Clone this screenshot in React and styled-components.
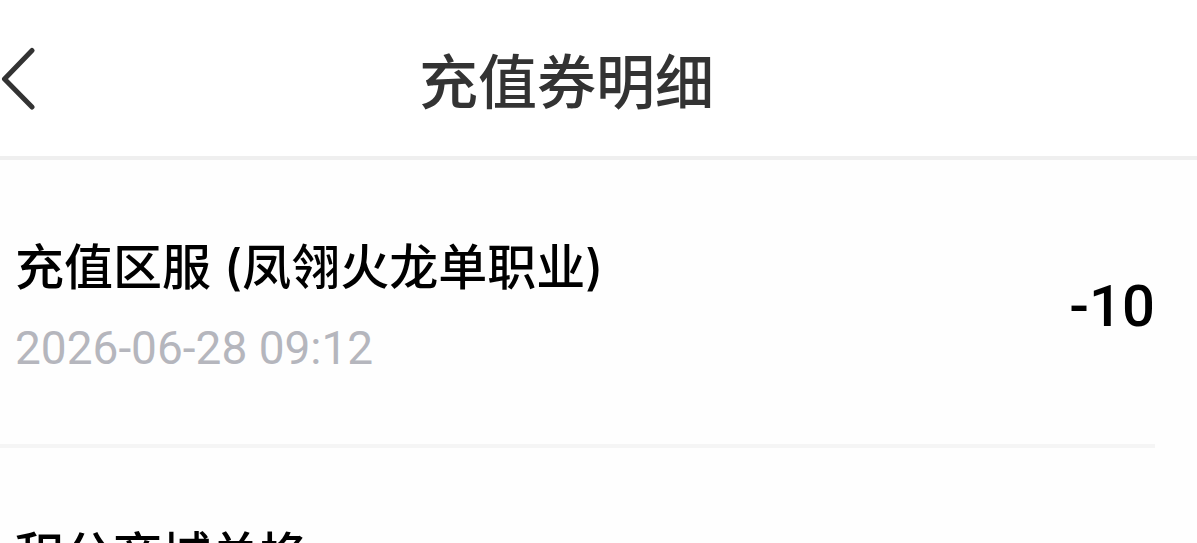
import React from "react";
import styled, { createGlobalStyle } from "styled-components";

const GlobalStyle = createGlobalStyle`
  *, *::before, *::after { box-sizing: border-box; }
  body {
    margin: 0;
    background: #fefefe;
    color: #000;
    font-family: Inter, "Noto Sans CJK SC", sans-serif;
  }
`;

const Page = styled.div`
  height: 100vh;
  overflow: hidden;
`;

const Header = styled.header`
  display: flex;
  align-items: center;
  height: 160px;
  padding-right: 64px;
  background: #fff;
  border-bottom: 4px solid #efefef;
`;

const BackButton = styled.button`
  display: flex;
  width: 40px;
  margin-right: -40px;
  padding: 0;
  border: 0;
  background: none;
  color: #333;
  cursor: pointer;
`;

const Title = styled.h1`
  flex: 1;
  margin: 0;
  padding-top: 2px;
  color: #333;
  font-family: "Noto Sans CJK SC", sans-serif;
  font-size: 59px;
  font-weight: 500;
  line-height: 80px;
  text-align: center;
`;

const List = styled.ul`
  margin: 0;
  padding: 0 42px 0 0;
  list-style: none;
`;

const Row = styled.li`
  display: flex;
  align-items: center;
  justify-content: space-between;
  padding: 72px 0 64px;
  border-bottom: 4px solid #f5f5f5;
`;

const Details = styled.div`
  display: flex;
  flex-direction: column;
  gap: 12px;
  padding-left: 15px;
`;

const Name = styled.h2`
  margin: 0;
  font-size: 49px;
  font-weight: 500;
  line-height: 72px;
`;

const Time = styled.time`
  color: #b5b6bd;
  font-family: Roboto, sans-serif;
  font-size: 46px;
  line-height: 64px;
`;

const Amount = styled.span`
  font-family: Roboto, sans-serif;
  font-size: 58px;
  font-weight: 500;
  line-height: 80px;
`;

const records = [
  { name: "充值区服 (凤翎火龙单职业)", time: "2026-06-28 09:12", amount: "-10" },
  { name: "积分商城兑换" },
];

export default function App() {
  return (
    <Page>
      <GlobalStyle />
      <Header>
        <BackButton type="button" aria-label="返回">
          <svg width="40" height="64" viewBox="0 0 40 64" fill="none" aria-hidden="true">
            <path
              d="M32 4.5 4.5 33 32 61"
              stroke="currentColor"
              strokeWidth="5"
              strokeLinecap="round"
              strokeLinejoin="round"
            />
          </svg>
        </BackButton>
        <Title>充值券明细</Title>
      </Header>
      <List>
        {records.map((record) => (
          <Row key={record.name}>
            <Details>
              <Name>{record.name}</Name>
              {record.time && <Time>{record.time}</Time>}
            </Details>
            {record.amount && <Amount>{record.amount}</Amount>}
          </Row>
        ))}
      </List>
    </Page>
  );
}
